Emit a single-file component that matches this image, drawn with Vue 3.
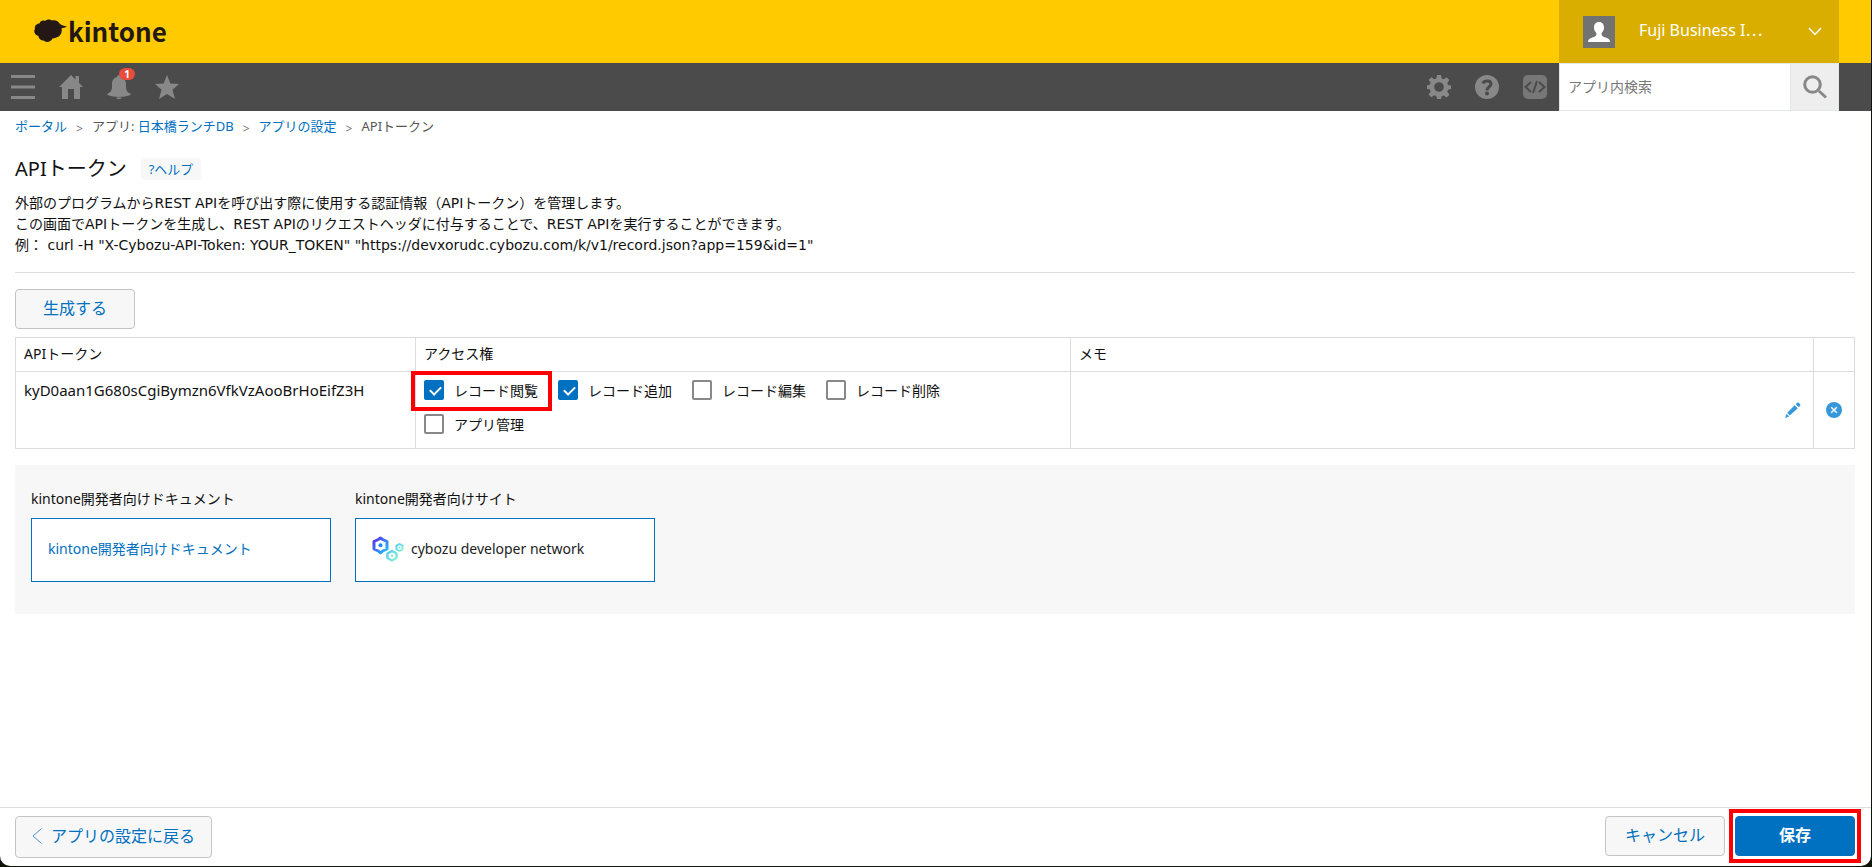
<script setup>
import { ref } from 'vue'

const keyword = ref('')
const permissions = ref([
  { id: 'view', label: 'レコード閲覧', checked: true, marked: true },
  { id: 'add', label: 'レコード追加', checked: true },
  { id: 'edit', label: 'レコード編集', checked: false },
  { id: 'delete', label: 'レコード削除', checked: false },
  { id: 'manage', label: 'アプリ管理', checked: false },
])
</script>

<template>
  <div class="page">
    <header class="brand-bar">
      <a class="logo" href="#">
        <svg width="34" height="24" viewBox="0 0 34 24" aria-hidden="true">
          <path fill="#231815" d="M5.500 4.500C6 2 9 1 11 2C13 0 16 0 18 1.500C21 .5 24.500 2 26 5C27.500 6.200 30 7 33 7.500C31 8.500 29 9 27.500 9.500C28.500 13 26.500 17 23.500 18C22 19 20 19 18.500 19.500C17 23 12 24 9.500 21.500C7 21.500 4.500 19.500 4.500 17C1 16 -1 12.500 1 10C0 7 3 4.500 5.500 4.500Z"/>
        </svg>
        <span>kintone</span>
      </a>
      <button class="user" type="button">
        <svg class="avatar" width="32" height="32" viewBox="0 0 32 32" aria-hidden="true">
          <path fill="#707372" d="M0 0h32v32H0z"/>
          <path fill="#fff" d="M16 6c-3.500 0-5 2.500-5 5.500 0 2.500 1 4 2.300 5.500.5 2-.3 3-1.800 3.700C8.500 22 5 22 5 26h22c0-4-3.500-4-6.500-5.300-1.500-.7-2.300-1.700-1.800-3.700C20 15.500 21 14 21 11.500 21 8.500 19.500 6 16 6z"/>
        </svg>
        <span class="user-name">Fuji Business I⋯</span>
        <svg width="14" height="9" viewBox="0 0 14 9" aria-hidden="true"><path fill="none" stroke="#fff" stroke-width="1.500" d="M1 1l6 6.500L13 1"/></svg>
      </button>
    </header>

    <nav class="tool-bar">
      <div class="tools left">
        <button type="button" aria-label="メニュー">
          <svg width="24" height="24" viewBox="0 0 24 24"><path d="M0 0h24v3H0zM0 10.500h24v3H0zM0 21h24v3H0z"/></svg>
        </button>
        <button type="button" aria-label="ポータル">
          <svg width="24" height="24" viewBox="0 0 24 24"><path d="M12 0l4.500 4.500V1H20v7l4 4h-3v12h-6v-10H9v10H3V12H0z"/></svg>
        </button>
        <button type="button" aria-label="通知" class="bell">
          <svg width="24" height="24" viewBox="0 0 24 24"><path d="M12 0c1.200 0 2 .8 2 2 4 1 5 4 5 8 0 5 .5 7 4.500 8.500V20c-6 2.500-17 2.500-23 0v-1.500C4.500 17 5 15 5 10c0-4 1-7 5-8 0-1.200.8-2 2-2zM9 22.500h6c-1 2-5 2-6 0z"/></svg>
          <span class="badge">1</span>
        </button>
        <button type="button" aria-label="ブックマーク">
          <svg width="24" height="24" viewBox="0 0 24 24"><path d="M12 0l3.400 8.500 8.600.5-6.500 5.800L20 24l-8-5-8 5 2.500-9.200L0 9l8.600-.5z"/></svg>
        </button>
      </div>
      <div class="tools right">
        <button type="button" aria-label="設定">
          <svg width="24" height="24" viewBox="0 0 24 24"><path fill-rule="evenodd" d="M10 0h4l.7 3.500 2 .8 2.900-2.100 2.800 2.800-2.100 2.900.8 2 2.900.6v3.500l-2.900.7-.8 2 2.100 3-2.800 2.700-2.900-2-2 .8L14 24h-4l-.7-3-2-.8-2.900 2-2.800-2.700 2.100-3-.8-2L0 13.800v-3.500l2.900-.6.8-2L1.600 5l2.800-2.800 2.900 2.100 2-.8zM12 7.200a4.800 4.800 0 100 9.600 4.800 4.800 0 000-9.600z"/></svg>
        </button>
        <button type="button" aria-label="ヘルプ">
          <svg width="24" height="24" viewBox="0 0 24 24"><circle cx="12" cy="12" r="12"/><path fill="none" stroke="#4b4b4b" stroke-width="3" d="M8 8.500C9 5 16 5 16 9c0 3-4 2.500-4 6.500"/><circle class="cut" cx="12" cy="18.500" r="2"/></svg>
        </button>
        <button type="button" aria-label="開発者向け">
          <svg width="24" height="24" viewBox="0 0 24 24"><rect width="24" height="24" rx="5" fill="#777"/><path fill="none" stroke="#4b4b4b" stroke-width="2" d="M8 7l-5.500 5L8 17M16 7l5.500 5-5.500 5M14 6l-4 12"/></svg>
        </button>
      </div>
      <form class="search" @submit.prevent>
        <input v-model="keyword" type="text" aria-label="アプリ内検索" placeholder="アプリ内検索">
        <button type="submit" aria-label="検索">
          <svg width="24" height="24" viewBox="0 0 24 24"><path fill="none" stroke="#888" stroke-width="3" d="M16 16l7 6.500"/><circle cx="9.500" cy="9.500" r="7.800" fill="none" stroke="#888" stroke-width="3"/></svg>
        </button>
      </form>
    </nav>

    <main>
      <nav class="crumbs" aria-label="パンくず">
        <a href="#">ポータル</a><i>&gt;</i>
        <span>アプリ: <a href="#">日本橋ランチDB</a></span><i>&gt;</i>
        <a href="#">アプリの設定</a><i>&gt;</i>
        <span>APIトークン</span>
      </nav>
      <div class="heading">
        <h1>APIトークン</h1>
        <a class="help" href="#">?ヘルプ</a>
      </div>
      <p class="intro">
        外部のプログラムからREST APIを呼び出す際に使用する認証情報（APIトークン）を管理します。<br>
        この画面でAPIトークンを生成し、REST APIのリクエストヘッダに付与することで、REST APIを実行することができます。<br>
        例： curl -H "X-Cybozu-API-Token: YOUR_TOKEN" "https://devxorudc.cybozu.com/k/v1/record.json?app=159&amp;id=1"
      </p>
      <button class="btn" type="button">生成する</button>

      <table>
        <colgroup><col class="c-token"><col class="c-access"><col><col class="c-delete"></colgroup>
        <thead>
          <tr><th>APIトークン</th><th>アクセス権</th><th>メモ</th><th></th></tr>
        </thead>
        <tbody>
          <tr>
            <td class="token">kyD0aan1G680sCgiBymzn6VfkVzAooBrHoEifZ3H</td>
            <td class="access">
              <div class="checks">
                <label v-for="p in permissions" :key="p.id" :class="{ marked: p.marked }">
                  <input v-model="p.checked" type="checkbox">{{ p.label }}
                </label>
              </div>
            </td>
            <td class="memo">
              <button type="button" aria-label="メモを編集">
                <svg width="16" height="16" viewBox="0 0 16 16"><path fill="#3498db" d="M12.200.8c1-1.200 4 1.700 3 3l-1.500 1.400-3-3zM9.700 3.200l3 3-7.900 7.300-2.600-2.700zM1.600 11.800l2.600 2.600L0 16z"/></svg>
              </button>
            </td>
            <td class="delete">
              <button type="button" aria-label="削除">
                <svg width="16" height="16" viewBox="0 0 16 16"><circle cx="8" cy="8" r="8" fill="#3498db"/><path stroke="#fff" stroke-width="1.500" d="M5.200 5.200l5.600 5.600M10.800 5.200l-5.600 5.600"/></svg>
              </button>
            </td>
          </tr>
        </tbody>
      </table>

      <section class="resources">
        <div class="resource">
          <h2>kintone開発者向けドキュメント</h2>
          <a class="card" href="#">kintone開発者向けドキュメント</a>
        </div>
        <div class="resource">
          <h2>kintone開発者向けサイト</h2>
          <a class="card network" href="#">
            <svg width="32" height="28" viewBox="0 0 32 28" fill="none" aria-hidden="true">
              <defs>
                <linearGradient id="gear-main" x1="0" y1="0" x2="1" y2="1"><stop offset="0" stop-color="#5b2ee8"/><stop offset="1" stop-color="#20c4ff"/></linearGradient>
                <linearGradient id="gear-sub" x1="0" y1="0" x2="1" y2="1"><stop offset="0" stop-color="#52cdf0"/><stop offset="1" stop-color="#90f2cf"/></linearGradient>
              </defs>
              <g transform="translate(0 1)">
                <path stroke="url(#gear-main)" stroke-width="3" stroke-linejoin="round" d="M8.500 3l2.200 1.500 4.300 2v7.500l-4.300 2-2.200 2-2.200-2-4.300-2V6.500l4.300-2z"/>
                <circle cx="8.500" cy="10.300" r="2" fill="#1688ff"/>
                <path stroke="url(#gear-sub)" stroke-width="2.500" stroke-linejoin="round" d="M20 16l4.500 2.500V23L20 25.500 15.500 23v-4.500z"/>
                <circle cx="20" cy="20.800" r="1" fill="#62d9df"/>
                <path stroke="url(#gear-sub)" stroke-width="2" stroke-linejoin="round" d="M27.500 9l3 1.700v3.600l-3 1.700-3-1.700v-3.600z"/>
                <circle cx="27.500" cy="12.500" r="1" fill="#7ae9dc"/>
              </g>
            </svg>
            <span>cybozu developer network</span>
          </a>
        </div>
      </section>
    </main>

    <footer>
      <button class="btn back" type="button">
        <svg width="10" height="16" viewBox="0 0 10 16" aria-hidden="true"><path fill="none" stroke="#3a96d8" d="M9.500.5L1 8l8.500 7.500"/></svg>
        アプリの設定に戻る
      </button>
      <div class="actions">
        <button class="btn" type="button">キャンセル</button>
        <span class="marked save"><button class="btn primary" type="button">保存</button></span>
      </div>
    </footer>
  </div>
</template>

<style>
html { background: #101408; }
body { margin: 0; }
</style>

<style scoped>
* { box-sizing: border-box; }
.page {
  display: flex;
  flex-direction: column;
  min-height: calc(100vh - 1px);
  margin: 0 1px 1px 0;
  overflow: hidden;
  border-radius: 0 0 10px 10px;
  background: #fff;
  color: #111;
  font: 14px/21px "Noto Sans", "Noto Sans CJK JP", sans-serif;
}
button, input { font: inherit; color: inherit; }
button { margin: 0; padding: 0; border: 0; background: none; cursor: pointer; }
svg { display: block; flex: none; }
a { color: #0070c0; text-decoration: none; }

.brand-bar {
  display: flex;
  justify-content: space-between;
  height: 63px;
  padding: 0 32px 0 34px;
  background: #ffcb00;
}
.logo {
  display: flex;
  align-items: center;
  padding-bottom: 2px;
  color: #231815;
  font: bold 26px/32px "Noto Sans CJK JP", sans-serif;
}
.user {
  display: flex;
  align-items: center;
  width: 280px;
  padding: 0 17px 0 24px;
  background: #d9ae00;
  color: #fff;
  font-size: 16px;
}
.user-name { flex: 1; margin-left: 24px; padding-bottom: 2px; text-align: left; }

.tool-bar {
  display: flex;
  height: 48px;
  padding-right: 32px;
  background: #4b4b4b;
}
.tools { display: flex; }
.tools.right { margin-left: auto; }
.tools button { position: relative; display: grid; place-items: center; width: 48px; }
.tools.left button { padding-right: 2px; }
.tools svg { fill: #888; }
.tools .cut { fill: #4b4b4b; }
.badge {
  position: absolute;
  top: 5px;
  left: 23px;
  width: 16px;
  border-radius: 6px;
  background: #e74c3c;
  color: #fff;
  font-size: 10px;
  font-weight: bold;
  line-height: 12px;
}
.search { display: flex; width: 280px; border: 1px solid #e3e7e8; background: #fff; }
.search input { flex: 1; min-width: 0; padding: 0 8px 2px; border: 0; border-right: 1px solid #e3e7e8; outline: 0; background: none; }
.search input::placeholder { color: #777; opacity: 1; }
.search button { display: grid; place-items: center; width: 47px; background: #eee; }

main { flex: 1; padding: 0 16px 0 15px; }
.crumbs { display: flex; padding-top: 5px; color: #555; font-size: 13px; }
.crumbs i { margin: 2px 9px 0; color: #777; font-size: 12px; font-style: normal; }
.heading { display: flex; align-items: center; gap: 14px; margin-top: 15px; }
h1 { margin: 0; font-size: 20px; font-weight: normal; line-height: 30px; }
.help { padding: 0 8px; border-radius: 4px; background: #f7f7f7; font-size: 13px; line-height: 22px; }
.intro { margin: 9px 0 16px; padding-bottom: 16px; border-bottom: 1px solid #dcdcdc; font-family: "DejaVu Sans", "Noto Sans CJK JP", sans-serif; }

.btn {
  display: flex;
  align-items: center;
  justify-content: center;
  min-width: 120px;
  height: 40px;
  padding-bottom: 2px;
  border: 1px solid #c4c4c4;
  border-radius: 4px;
  background: #f7f7f7;
  color: #0070c0;
  font-size: 16px;
}
table { width: 100%; margin: 8px 0 16px; border-collapse: collapse; table-layout: fixed; }
.c-token { width: 400px; }
.c-access { width: 655px; }
.c-delete { width: 41px; }
th, td { padding: 5px 8px 7px; border: 1px solid #dcdcdc; font-weight: normal; text-align: left; }
td { height: 77px; vertical-align: top; }
td.token { padding-top: 8px; font-size: 15px; }
td.access { padding-top: 6px; }
.checks { display: flex; flex-wrap: wrap; gap: 10px 16px; max-width: 540px; }
.checks label { position: relative; display: flex; align-items: center; width: 118px; height: 24px; white-space: nowrap; }
.checks input {
  position: relative;
  flex: none;
  appearance: none;
  width: 20px;
  height: 20px;
  margin: 0 10px 0 0;
  border: 2px solid #888;
  border-radius: 2px;
  background: #fff;
}
.checks input:checked { border-color: #0070c0; background: #0070c0; }
.checks input:checked::after {
  position: absolute;
  top: 4px;
  left: 4px;
  width: 9px;
  height: 5px;
  border: solid #fff;
  border-width: 0 0 2px 2px;
  content: "";
  transform: rotate(-45deg);
}
.marked::after {
  position: absolute;
  inset: -7px -10px -9px -13px;
  border: 4px solid #f00;
  content: "";
  pointer-events: none;
}
td.memo, td.delete { padding: 6px 8px; vertical-align: middle; }
.memo button { margin-left: auto; padding-right: 4px; }
.memo button, .delete button { display: block; }
.delete button { margin: 0 auto; }

.resources { display: flex; gap: 24px; padding: 23px 16px 32px; background: #f7f7f7; }
.resource { width: 300px; }
h2 { margin: 0 0 9px; font-size: 14px; font-weight: normal; line-height: 21px; }
.card { display: flex; align-items: center; height: 64px; padding: 0 16px 4px; border: 1px solid #0070c0; background: #fff; }
.network { gap: 7px; color: #222; }

footer {
  display: flex;
  align-items: flex-start;
  justify-content: space-between;
  padding: 8px 16px 8px 15px;
  border-top: 1px solid #dcdcdc;
}
.back { gap: 9px; height: 42px; padding: 0 16px 2px; }
.actions { display: flex; gap: 10px; }
.save { position: relative; }
.save::after { inset: -7px -6px; }
.primary { border-color: #0070c0; background: #0070c0; color: #fff; font-weight: bold; }
</style>
